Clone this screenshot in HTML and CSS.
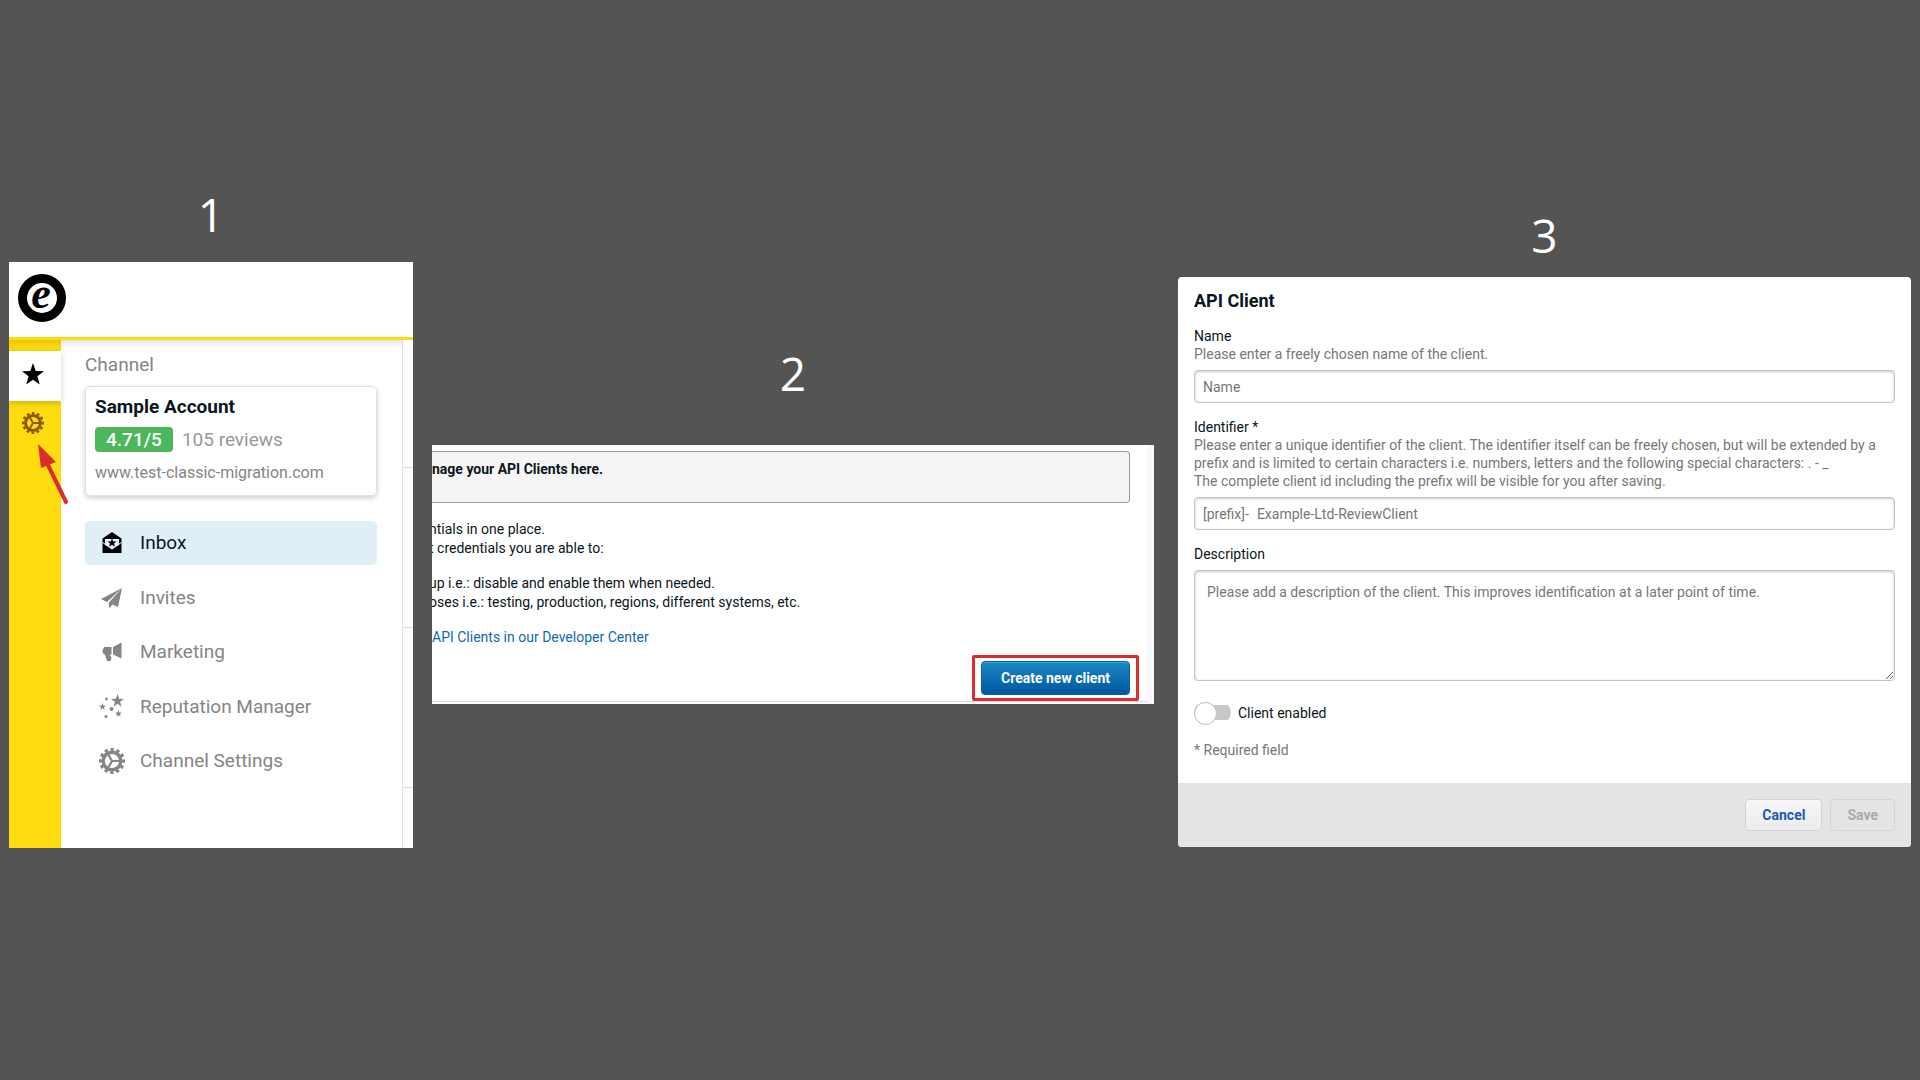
FILE: index.html
```html
<!DOCTYPE html>
<html lang="en">
<head>
    <meta charset="UTF-8">
    <meta name="viewport" content="width=device-width, initial-scale=1.0">
    <title>Create an API Client</title>
    <link rel="stylesheet" href="styles.css">
</head>
<body>
    <!-- shared icons -->
    <svg class="sprite" aria-hidden="true">
        <symbol id="star" viewBox="0 0 24 24">
            <path d="M12 0l3 8.800 9 .2-7.200 5.500 2.600 9-7.400-5.300-7.400 5.300 2.600-9L0 9l9-.2z"/>
        </symbol>
        <symbol id="gear" viewBox="0 0 26 26">
            <g fill="none" stroke="currentColor">
                <circle cx="13" cy="13" r="8.800" stroke-width="3.400"/>
                <circle cx="13" cy="13" r="11.500" stroke-width="3" pathLength="48" stroke-dasharray="2.200 1.800" stroke-dashoffset="1"/>
                <path stroke-width="2.200" d="M13 13h8M13 13l-4-7M13 13l-4 7"/>
            </g>
        </symbol>
    </svg>

    <main class="steps">
        <section class="step step-one">
            <h2 class="number">1</h2>
            <div class="panel app">
                <header class="app-header">
                    <svg class="logo" viewBox="0 0 48 48" role="img" aria-label="Logo">
                        <circle cx="24" cy="24" r="19.500" fill="#fff" stroke="#000" stroke-width="9"/>
                        <text class="logo-letter" x="23" y="34" text-anchor="middle">e</text>
                    </svg>
                </header>
                <div class="app-body">
                    <nav class="rail" aria-label="Main">
                        <a class="rail-link active" href="#" aria-label="Reviews"><svg class="rail-icon"><use href="#star"/></svg></a>
                        <a class="rail-link" href="#" aria-label="Settings"><svg class="rail-icon"><use href="#gear"/></svg></a>
                        <svg class="arrow" viewBox="0 0 32 62" aria-hidden="true">
                            <path d="M10 20l19 39" stroke="#dc2c2f" stroke-width="4" stroke-linecap="round"/>
                            <path d="M1 1l18 18-15 6z" fill="#dc2c2f"/>
                        </svg>
                    </nav>
                    <div class="channel">
                        <h3 class="channel-title">Channel</h3>
                        <div class="account">
                            <div class="account-name">Sample Account</div>
                            <div class="account-rating"><span class="badge">4.71/5</span><span>105 reviews</span></div>
                            <div class="account-url">www.test-classic-migration.com</div>
                        </div>
                        <nav class="menu" aria-label="Channel">
                            <a class="menu-link active" href="#">
                                <svg class="menu-icon" viewBox="0 0 26 26">
                                    <path fill="#000" d="M13 2l9.500 6.500V23h-19V8.500z"/>
                                    <path fill="#e0eef6" d="M6 9h14v6l-7 4.500L6 15z"/>
                                    <path fill="#000" d="M13 8.500l1.300 3h3.200l-2.500 2 .9 3.200-2.900-1.900-2.900 1.900.9-3.200-2.500-2h3.200z"/>
                                    <path stroke="#e0eef6" d="M3.500 12.500L8 15.500M22.500 12.500L18 15.500"/>
                                </svg>
                                Inbox
                            </a>
                            <a class="menu-link" href="#">
                                <svg class="menu-icon" viewBox="0 0 26 26" fill="currentColor">
                                    <path d="M23 3L2 14l6 3zM23 3L9.500 18l1 5.500 3-4 5.500 2.500z"/>
                                </svg>
                                Invites
                            </a>
                            <a class="menu-link" href="#">
                                <svg class="menu-icon" viewBox="0 0 26 26" fill="currentColor">
                                    <path d="M22.500 3.500v16L14 15.500V8zM5 8h7.500v7.500H11l1.500 4-1 2.500H8l-2-6.500H5L3.500 13v-1.500z"/>
                                </svg>
                                Marketing
                            </a>
                            <a class="menu-link" href="#">
                                <svg class="menu-icon" viewBox="0 0 26 26" fill="currentColor">
                                    <use href="#star" x="12" y="0" width="13" height="13"/>
                                    <use href="#star" x="0" y="9" width="7" height="7"/>
                                    <use href="#star" x="16" y="16" width="7" height="7"/>
                                    <circle cx="7.500" cy="5" r="1.400"/>
                                    <circle cx="12.500" cy="15" r="2"/>
                                    <circle cx="7" cy="22.500" r="1.500"/>
                                </svg>
                                Reputation Manager
                            </a>
                            <a class="menu-link" href="#">
                                <svg class="menu-icon"><use href="#gear"/></svg>
                                Channel Settings
                            </a>
                        </nav>
                    </div>
                    <div class="list-edge"></div>
                </div>
            </div>
        </section>

        <section class="step step-two">
            <h2 class="number">2</h2>
            <div class="panel clients">
                <div class="info">nage your API Clients here.</div>
                <div class="clients-text">
                    <p>ntials in one place.<br>t credentials you are able to:</p>
                    <p>up i.e.: disable and enable them when needed.<br>oses i.e.: testing, production, regions, different systems, etc.</p>
                    <a href="#">API Clients in our Developer Center</a>
                </div>
                <div class="clients-actions">
                    <div class="highlight">
                        <button type="button" class="btn btn-primary">Create new client</button>
                    </div>
                </div>
            </div>
        </section>

        <section class="step step-three">
            <h2 class="number">3</h2>
            <form class="panel dialog">
                <div class="dialog-body">
                    <h3 class="dialog-title">API Client</h3>
                    <div class="field">
                        <label for="name">Name</label>
                        <p class="help">Please enter a freely chosen name of the client.</p>
                        <div class="control"><input type="text" id="name" placeholder="Name"></div>
                    </div>
                    <div class="field">
                        <label for="identifier">Identifier *</label>
                        <p class="help">Please enter a unique identifier of the client. The identifier itself can be freely chosen, but will be extended by a prefix and is limited to certain characters i.e. numbers, letters and the following special characters: . - _<br>The complete client id including the prefix will be visible for you after saving.</p>
                        <div class="control"><span>[prefix]-</span><input type="text" id="identifier" placeholder="Example-Ltd-ReviewClient"></div>
                    </div>
                    <div class="field">
                        <label for="description">Description</label>
                        <textarea id="description" placeholder="Please add a description of the client. This improves identification at a later point of time."></textarea>
                    </div>
                    <div class="switch-row">
                        <input type="checkbox" class="switch" id="enabled">
                        <label for="enabled">Client enabled</label>
                    </div>
                    <p class="help">* Required field</p>
                </div>
                <footer class="dialog-footer">
                    <button type="button" class="btn btn-cancel">Cancel</button>
                    <button type="submit" class="btn btn-save" disabled>Save</button>
                </footer>
            </form>
        </section>
    </main>
</body>
</html>
```
FILE: styles.css
```css
* {
    box-sizing: border-box;
}
body {
    margin: 0;
    min-height: 100vh;
    background-color: #545454;
    color: #0b1520;
    font-family: Roboto, sans-serif;
    font-size: 14px;
    line-height: 18px;
}
h2,
h3,
p {
    margin: 0;
}
a {
    text-decoration: none;
}
.sprite {
    display: none;
}
.steps {
    display: grid;
    grid-template-columns: 423fr 746fr 733fr;
    align-items: start;
    padding: 0 9px;
}
.step {
    min-width: 0;
}
.step-one {
    padding: 190px 19px 0 0;
}
.step-two {
    padding: 349px 24px 0 0;
}
.step-three {
    padding-top: 211px;
}
.number {
    margin-bottom: 24px;
    color: #fff;
    font-family: "Open Sans", sans-serif;
    font-size: 46px;
    font-weight: 400;
    line-height: 48px;
    text-align: center;
}
.step-two .number {
    margin-bottom: 48px;
}
.step-three .number {
    margin-bottom: 18px;
}
.panel {
    background-color: #fff;
    overflow: hidden;
}

/* step 1: sidebar */
.app-header {
    padding: 12px 9px 15px;
    border-bottom: 3px solid #ffdc0f;
}
.logo {
    display: block;
    width: 48px;
    height: 48px;
}
.logo-letter {
    font: italic bold 44px "Liberation Serif", serif;
}
.app-body {
    display: flex;
    min-height: 508px;
    box-shadow: inset 0 8px 8px -6px rgba(0, 0, 0, 0.15);
}
.rail {
    position: relative;
    width: 52px;
    padding-top: 11px;
    background-color: #ffdc0f;
    box-shadow: inset 0 8px 8px -6px rgba(0, 0, 0, 0.15);
}
.rail-link {
    display: flex;
    align-items: center;
    justify-content: center;
    height: 44px;
    padding-right: 4px;
    color: #8a5a00;
}
.rail-link.active {
    height: 50px;
    padding-bottom: 4px;
    background-color: #fff;
    color: #000;
    box-shadow: 0 2px 6px rgba(0, 0, 0, 0.2);
}
.rail-icon {
    width: 22px;
    height: 22px;
    fill: currentColor;
}
.arrow {
    position: absolute;
    top: 103px;
    left: 28px;
    width: 32px;
    height: 62px;
}
.channel {
    flex: 1;
    padding: 12px 25px 0 24px;
}
.channel-title,
.menu-link {
    color: #858585;
    font-size: 19px;
    font-weight: 400;
    line-height: 26px;
}
.account {
    margin: 8px 0 25px;
    padding: 7px 9px 10px;
    border: 1px solid #e0e0e0;
    border-radius: 5px;
    color: #999;
    font-size: 19px;
    line-height: 25px;
    box-shadow: 0 2px 5px rgba(0, 0, 0, 0.2);
}
.account-name {
    color: #0b1520;
    font-weight: 700;
}
.account-rating {
    display: flex;
    gap: 9px;
    margin: 8px 0;
}
.badge {
    padding: 0 11px;
    border-radius: 4px;
    background-color: #4cb75c;
    color: #fff;
    font-weight: 500;
}
.account-url {
    color: #858585;
    font-size: 16px;
}
.menu {
    display: flex;
    flex-direction: column;
    justify-content: space-between;
    height: 262px;
}
.menu-link {
    display: flex;
    align-items: center;
    gap: 15px;
    height: 44px;
    padding: 0 14px;
    border-radius: 5px;
}
.menu-link.active {
    background-color: #e0eef6;
    color: #0b1520;
}
.menu-icon {
    width: 26px;
    height: 26px;
}
.list-edge {
    width: 11px;
    border-left: 1px solid #e0e0e0;
    background: repeating-linear-gradient(#fcfcfc 0 127px, #ddd 127px 128px, #fcfcfc 128px 160px);
}

/* step 2: client list */
.clients {
    padding-top: 6px;
    border-right: 7px solid #f6f8fd;
    line-height: 19px;
}
.info {
    min-height: 52px;
    margin-right: 17px;
    padding-top: 8px;
    border: 1px solid #999;
    border-left: 0;
    border-radius: 0 4px 4px 0;
    background-color: #f5f5f5;
    font-weight: 700;
}
.clients-text {
    padding-top: 17px;
}
.clients-text p {
    margin: 0 0 16px -3px;
}
.clients-text a {
    color: #0f69b0;
}
.clients-actions {
    display: flex;
    justify-content: flex-end;
    margin-bottom: 2px;
    padding: 8px 8px 0;
    border-bottom: 1px solid #ddd;
}
.highlight {
    padding: 3px 6px;
    border: 3px solid #dc2c2f;
    border-radius: 2px;
}
.btn {
    height: 32px;
    padding: 0 16px;
    border: 1px solid #d4d4d4;
    border-radius: 4px;
    font-family: inherit;
    font-size: 14px;
    font-weight: 700;
}
.btn-primary {
    display: block;
    height: 34px;
    padding: 0 19px;
    border-color: #0a5f9e;
    background-image: linear-gradient(#1b87c6, #0057a0);
    color: #fff;
    box-shadow: inset 0 1px 0 #2fa9d6;
}

/* step 3: dialog */
.dialog {
    border-radius: 4px;
}
.dialog-body {
    padding: 15px 16px 24px;
}
.dialog-title {
    margin-bottom: 17px;
    font-size: 18px;
    font-weight: 700;
    line-height: 18px;
}
.field {
    margin-bottom: 15px;
}
.field label {
    display: block;
}
.help {
    color: #777;
}
.control,
textarea {
    border: 1px solid #c4c4c4;
    border-radius: 4px;
    background-color: #fff;
    box-shadow: inset 0 1px 3px rgba(0, 0, 0, 0.2);
}
.control {
    display: flex;
    align-items: center;
    gap: 8px;
    height: 33px;
    margin-top: 7px;
    padding: 0 8px;
    color: #777;
}
.control input {
    flex: 1;
    padding: 0;
    border: 0;
    background: none;
    font: inherit;
}
textarea {
    display: block;
    width: 100%;
    height: 111px;
    margin-top: 7px;
    padding: 12px;
    font: inherit;
}
::placeholder {
    color: #777;
}
.switch-row {
    display: flex;
    align-items: center;
    gap: 7px;
    margin: 21px 0 18px;
}
.switch {
    appearance: none;
    width: 37px;
    height: 21px;
    margin: 0;
    background: linear-gradient(#c8c8c8, #c8c8c8) center / 37px 15px no-repeat;
    border-radius: 11px;
}
.switch::before {
    content: "";
    display: block;
    width: 21px;
    height: 21px;
    border: 1px solid #bbb;
    border-radius: 50%;
    background-color: #fff;
}
.switch:checked::before {
    margin-left: 16px;
}
.dialog-footer {
    display: flex;
    justify-content: flex-end;
    gap: 8px;
    padding: 16px;
    background-color: #e4e4e4;
}
.btn-cancel {
    background-image: linear-gradient(#f6f6f6, #ececec);
    color: #1f57b5;
}
.btn-save {
    background-color: #e4e4e4;
    color: #aaa;
}
```
